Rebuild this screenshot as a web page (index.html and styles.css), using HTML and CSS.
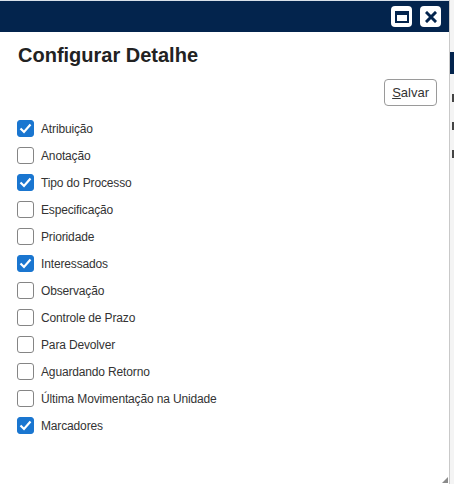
FILE: index.html
```html
<!DOCTYPE html>
<html lang="pt-BR">
<head>
<meta charset="UTF-8">
<meta name="viewport" content="width=device-width, initial-scale=1.0">
<title>Configurar Detalhe</title>
<link rel="stylesheet" href="styles.css">
</head>
<body>
<div class="screen">
  <div class="dialog">
    <div class="topline"></div>
    <div class="titlebar">
      <button class="tb-btn" title="Maximizar">
        <svg width="14" height="12" viewBox="0 0 14 12"><rect x="1" y="1" width="12" height="10" fill="none" stroke="#03244d" stroke-width="2"/><rect x="1" y="1" width="12" height="3" fill="#03244d"/></svg>
      </button>
      <button class="tb-btn" title="Fechar">
        <svg width="12" height="12" viewBox="0 0 12 12"><path d="M2 2 L10 10 M10 2 L2 10" stroke="#03244d" stroke-width="3" stroke-linecap="square"/></svg>
      </button>
    </div>
    <div class="content">
      <h1>Configurar Detalhe</h1>
      <div class="actions">
        <button class="btn"><u>S</u>alvar</button>
      </div>
      <ul class="options">
        <li class="checked"><span class="box"><svg width="13" height="11" viewBox="0 0 13 11"><path d="M1.5 5.5 L5 9 L11.5 1.5" fill="none" stroke="#fff" stroke-width="2.2"/></svg></span>Atribuição</li>
        <li><span class="box"></span>Anotação</li>
        <li class="checked"><span class="box"><svg width="13" height="11" viewBox="0 0 13 11"><path d="M1.5 5.5 L5 9 L11.5 1.5" fill="none" stroke="#fff" stroke-width="2.2"/></svg></span>Tipo do Processo</li>
        <li><span class="box"></span>Especificação</li>
        <li><span class="box"></span>Prioridade</li>
        <li class="checked"><span class="box"><svg width="13" height="11" viewBox="0 0 13 11"><path d="M1.5 5.5 L5 9 L11.5 1.5" fill="none" stroke="#fff" stroke-width="2.2"/></svg></span>Interessados</li>
        <li><span class="box"></span>Observação</li>
        <li><span class="box"></span>Controle de Prazo</li>
        <li><span class="box"></span>Para Devolver</li>
        <li><span class="box"></span>Aguardando Retorno</li>
        <li><span class="box"></span>Última Movimentação na Unidade</li>
        <li class="checked"><span class="box"><svg width="13" height="11" viewBox="0 0 13 11"><path d="M1.5 5.5 L5 9 L11.5 1.5" fill="none" stroke="#fff" stroke-width="2.2"/></svg></span>Marcadores</li>
      </ul>
    </div>
    <span class="grip"></span>
  </div>
  <div class="behind">
    <div class="behind-bar"></div>
    <span class="tick"></span>
    <span class="tick"></span>
    <span class="tick"></span>
  </div>
</div>
</body>
</html>
```
FILE: styles.css
```css
body {
  margin: 0;
  font-family: "Liberation Sans", Arial, sans-serif;
  background: #fff;
}
.screen {
  display: flex;
  height: 484px;
  overflow: hidden;
}
.dialog {
  position: relative;
  width: 449px;
  flex-shrink: 0;
  border-right: 1px solid #c9c9c9;
  background: #fff;
}
.topline {
  height: 1px;
  background: #d9e1ea;
}
.titlebar {
  height: 31px;
  background: #03244d;
  display: flex;
  justify-content: flex-end;
  align-items: center;
  gap: 8px;
  padding-right: 8px;
}
.tb-btn {
  width: 21px;
  height: 21px;
  padding: 0;
  border: 0;
  border-radius: 4px;
  background: #fff;
  display: flex;
  align-items: center;
  justify-content: center;
}
.content {
  padding: 12px 12px 0 17px;
}
h1 {
  margin: 0 0 0 1px;
  font-size: 20px;
  line-height: 23px;
  font-weight: bold;
  color: #222;
}
.actions {
  display: flex;
  justify-content: flex-end;
  margin-top: 12px;
}
.btn {
  height: 27px;
  padding: 0 7px;
  border: 1px solid #9a9a9a;
  border-radius: 4px;
  background: #fff;
  font-family: inherit;
  font-size: 13px;
  color: #333;
}
.options {
  list-style: none;
  margin: 9px 0 0;
  padding: 0;
}
.options li {
  height: 27px;
  display: flex;
  align-items: center;
  gap: 7px;
  font-size: 12px;
  letter-spacing: -0.15px;
  color: #333;
}
.box {
  width: 15px;
  height: 15px;
  border: 1px solid #858585;
  border-radius: 3px;
  background: #fff;
  display: flex;
  align-items: center;
  justify-content: center;
}
.checked .box {
  border-color: #1a76d0;
  background: #1a76d0;
}
.grip {
  position: absolute;
  right: 1px;
  bottom: 1px;
  width: 0;
  height: 0;
  border-left: 6px solid transparent;
  border-bottom: 6px solid #8a8a8a;
}
.behind {
  flex: 1;
  background: #f4f4f4;
  display: flex;
  flex-direction: column;
  align-items: flex-end;
}
.behind-bar {
  width: 100%;
  height: 22px;
  margin-top: 52px;
  background: #03244d;
}
.tick {
  width: 2px;
  height: 8px;
  background: #444;
  margin-top: 20px;
}
```
